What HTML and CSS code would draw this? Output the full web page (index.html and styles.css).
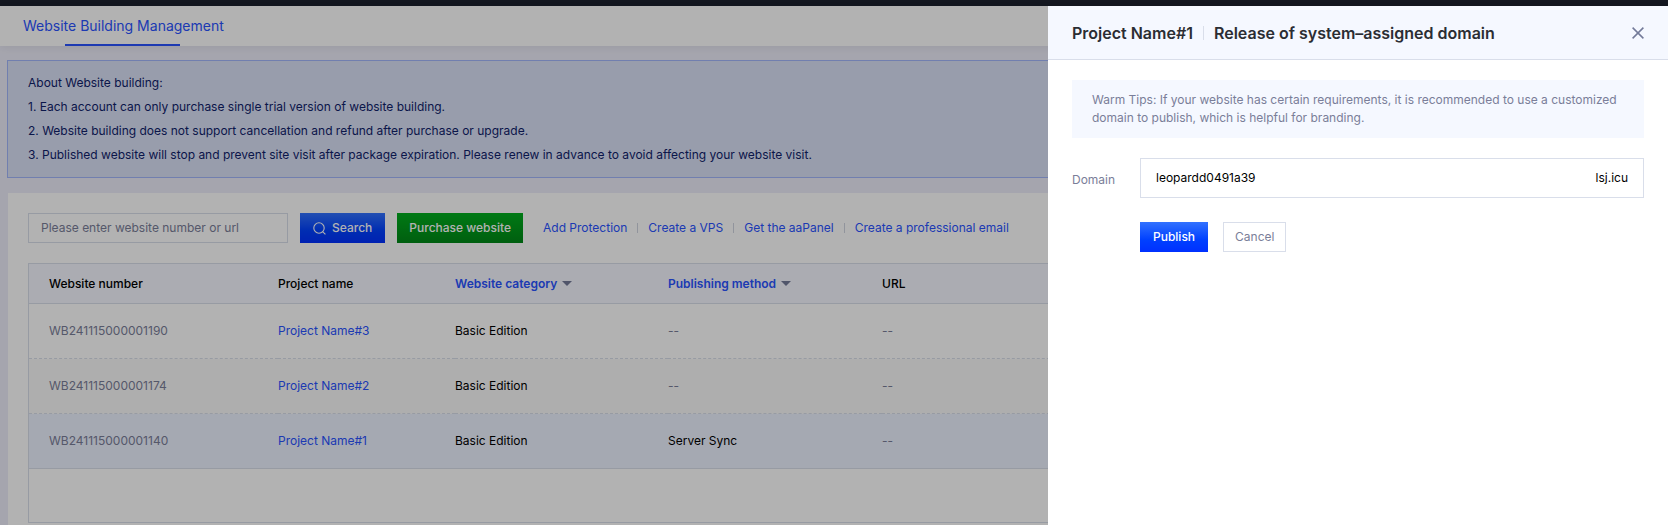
FILE: index.html
```html
<!DOCTYPE html>
<html lang="en">
<head>
    <meta charset="UTF-8">
    <meta name="viewport" content="width=device-width, initial-scale=1.0">
    <title>Website Building Management</title>
    <link rel="stylesheet" href="styles.css">
</head>
<body>

<div class="topbar"></div>

<nav class="tabs">
    <a class="tab" href="#">Website Building Management</a>
</nav>

<main class="main">
    <div class="notice">
        <p>About Website building:</p>
        <p>1. Each account can only purchase single trial version of website building.</p>
        <p>2. Website building does not support cancellation and refund after purchase or upgrade.</p>
        <p>3. Published website will stop and prevent site visit after package expiration. Please renew in advance to avoid affecting your website visit.</p>
    </div>

    <div class="panel">
        <div class="toolbar">
            <input class="search-input" type="text" placeholder="Please enter website number or url" aria-label="Website number or url">
            <button class="btn btn-primary btn-search" type="button">
                <svg width="13" height="13" viewBox="0 0 13 13" fill="none" stroke="currentColor" stroke-width="1.1">
                    <circle cx="6" cy="6" r="5.2"/>
                    <path d="M9.6 9.6L12.4 12.4"/>
                </svg>
                Search
            </button>
            <button class="btn btn-success" type="button">Purchase website</button>
            <div class="links">
                <a href="#">Add Protection</a>
                <a href="#">Create a VPS</a>
                <a href="#">Get the aaPanel</a>
                <a href="#">Create a professional email</a>
            </div>
        </div>

        <div class="table-box">
            <table class="table">
                <colgroup>
                    <col class="col-number">
                    <col class="col-name">
                    <col class="col-category">
                    <col class="col-method">
                    <col>
                </colgroup>
                <thead>
                    <tr>
                        <th>Website number</th>
                        <th>Project name</th>
                        <th class="filter">Website category<span class="caret"></span></th>
                        <th class="filter">Publishing method<span class="caret"></span></th>
                        <th>URL</th>
                    </tr>
                </thead>
                <tbody>
                    <tr>
                        <td class="muted">WB241115000001190</td>
                        <td><a href="#">Project Name#3</a></td>
                        <td>Basic Edition</td>
                        <td class="muted">--</td>
                        <td class="muted">--</td>
                    </tr>
                    <tr class="even">
                        <td class="muted">WB241115000001174</td>
                        <td><a href="#">Project Name#2</a></td>
                        <td>Basic Edition</td>
                        <td class="muted">--</td>
                        <td class="muted">--</td>
                    </tr>
                    <tr class="active">
                        <td class="muted">WB241115000001140</td>
                        <td><a href="#">Project Name#1</a></td>
                        <td>Basic Edition</td>
                        <td>Server Sync</td>
                        <td class="muted">--</td>
                    </tr>
                </tbody>
            </table>
            <div class="table-footer"></div>
        </div>
    </div>
</main>

<div class="mask"></div>

<!-- Release drawer -->
<aside class="drawer">
    <header class="drawer-header">
        <h2>Project Name#1</h2>
        <h2 class="drawer-title">Release of system–assigned domain</h2>
        <button class="close" type="button" aria-label="Close">
            <svg width="12" height="12" viewBox="0 0 12 12" fill="none" stroke="currentColor" stroke-width="1.5">
                <path d="M0.6 0.6L11.4 11.4M11.4 0.6L0.6 11.4"/>
            </svg>
        </button>
    </header>
    <form class="drawer-body">
        <p class="tips">Warm Tips: If your website has certain requirements, it is recommended to use a customized domain to publish, which is helpful for branding.</p>
        <div class="form-row">
            <label for="domain">Domain</label>
            <div class="domain-box">
                <input id="domain" type="text" value="leopardd0491a39">
                <span>lsj.icu</span>
            </div>
        </div>
        <div class="actions">
            <button class="btn btn-primary" type="button">Publish</button>
            <button class="btn btn-default" type="button">Cancel</button>
        </div>
    </form>
</aside>

</body>
</html>
```
FILE: styles.css
```css
* {
    box-sizing: border-box;
}

body {
    margin: 0;
    font-family: Inter, "Liberation Sans", sans-serif;
    font-size: 12px;
    line-height: 18px;
    color: #000;
    background: #ededf9;
    overflow: hidden;
}

p,
h2 {
    margin: 0;
}

a {
    color: #2a53ff;
    text-decoration: none;
}

button,
input {
    font: inherit;
}

.topbar {
    height: 6px;
    background: #141720;
}

.tabs {
    display: flex;
    height: 40px;
    padding-left: 23px;
    background: #fff;
    box-shadow: 0 2px 8px rgba(0, 0, 0, 0.06);
}

.tab {
    position: relative;
    font-size: 14px;
    line-height: 40px;
}

.tab::after {
    content: "";
    position: absolute;
    left: 21%;
    right: 22%;
    bottom: 0;
    height: 2px;
    background: #2a53ff;
}

.main {
    padding: 14px 8px 0;
}

.notice {
    margin: 0 -1px 15px;
    padding: 10px 20px;
    border: 1px solid #a3b6fb;
    background: #dae1f7;
    color: #10216a;
    line-height: 24px;
}

.panel {
    padding: 20px;
    background: #fff;
}

.toolbar {
    display: flex;
    align-items: center;
    margin-bottom: 20px;
}

.search-input {
    width: 260px;
    height: 30px;
    margin-right: 12px;
    padding: 0 12px 2px;
    border: 1px solid #d9deea;
    background: #fff;
}

.search-input::placeholder {
    color: #7a7e99;
}

.btn {
    display: flex;
    align-items: center;
    justify-content: center;
    height: 30px;
    padding: 0 13px;
    border: none;
    color: #fff;
    font-weight: 500;
    cursor: pointer;
}

.btn-primary {
    background: linear-gradient(#3272ff, #0040ff 60%, #0030ff);
}

.btn-search {
    gap: 6px;
    margin-right: 12px;
}

.btn-success {
    padding: 0 12px;
    background: linear-gradient(#00ae1e, #008816);
}

.btn-default {
    padding: 0 11px;
    border: 1px solid #d9deea;
    background: #fff;
    color: #7a7e99;
    font-weight: 400;
}

.links {
    display: flex;
    align-items: center;
    margin-left: 20px;
}

.links a {
    display: flex;
    align-items: center;
}

.links a + a::before {
    content: "";
    width: 1px;
    height: 10px;
    margin: 0 10px;
    background: #d0d4e0;
}

.table-box {
    border: 1px solid #d9deea;
}

.table {
    width: 100%;
    table-layout: fixed;
    border-collapse: separate;
    border-spacing: 0;
}

.col-number {
    width: 249px;
}

.col-name {
    width: 177px;
}

.col-category {
    width: 213px;
}

.col-method {
    width: 214px;
}

.table th {
    height: 40px;
    padding: 0;
    border-bottom: 1px solid #d9deea;
    background: #f5f7ff;
    font-weight: 500;
    text-align: left;
}

.table th:first-child,
.table td:first-child {
    padding-left: 20px;
}

.table .filter {
    color: #2a53ff;
    font-weight: 600;
}

.caret {
    display: inline-block;
    margin-left: 5px;
    border: 5px solid transparent;
    border-top-color: #737a99;
    border-bottom: none;
    vertical-align: 2px;
}

.table td {
    height: 55px;
    padding: 0;
    border-bottom: 1px dashed #d9deea;
}

.table .muted {
    color: #7a7e99;
}

.table .even td {
    background: #fafafa;
}

.table .active td {
    border-bottom-style: solid;
    background: #edf2ff;
}

.table-footer {
    height: 53px;
}

.mask {
    position: fixed;
    inset: 6px 0 0;
    background: rgba(0, 0, 0, 0.3);
}

.drawer {
    position: fixed;
    top: 6px;
    right: 0;
    bottom: 0;
    width: 620px;
    background: #fff;
}

.drawer-header {
    display: flex;
    align-items: center;
    height: 54px;
    padding: 0 24px;
    border-bottom: 1px solid #d9deea;
    background: #f5f8ff;
    color: #2b2d33;
}

.drawer-header h2 {
    font-size: 16px;
    font-weight: 600;
}

.drawer-title {
    display: flex;
    align-items: center;
}

.drawer-title::before {
    content: "";
    width: 1px;
    height: 14px;
    margin: 0 10px;
    background: #d9deea;
}

.close {
    display: flex;
    margin-left: auto;
    padding: 0;
    border: none;
    background: none;
    color: #737a99;
    cursor: pointer;
}

.drawer-body {
    padding: 20px 24px;
}

.tips {
    margin-bottom: 20px;
    padding: 11px 20px;
    background: #f5f8ff;
    color: #7a7e99;
}

.form-row {
    display: flex;
    align-items: center;
    margin-bottom: 24px;
}

.form-row label {
    width: 68px;
    padding-top: 3px;
    color: #7a7e99;
}

.domain-box {
    display: flex;
    flex: 1;
    align-items: center;
    height: 40px;
    padding: 0 15px;
    border: 1px solid #d9deea;
}

.domain-box input {
    flex: 1;
    padding: 0;
    border: none;
    outline: none;
}

.actions {
    display: flex;
    gap: 15px;
    padding-left: 68px;
}
```
